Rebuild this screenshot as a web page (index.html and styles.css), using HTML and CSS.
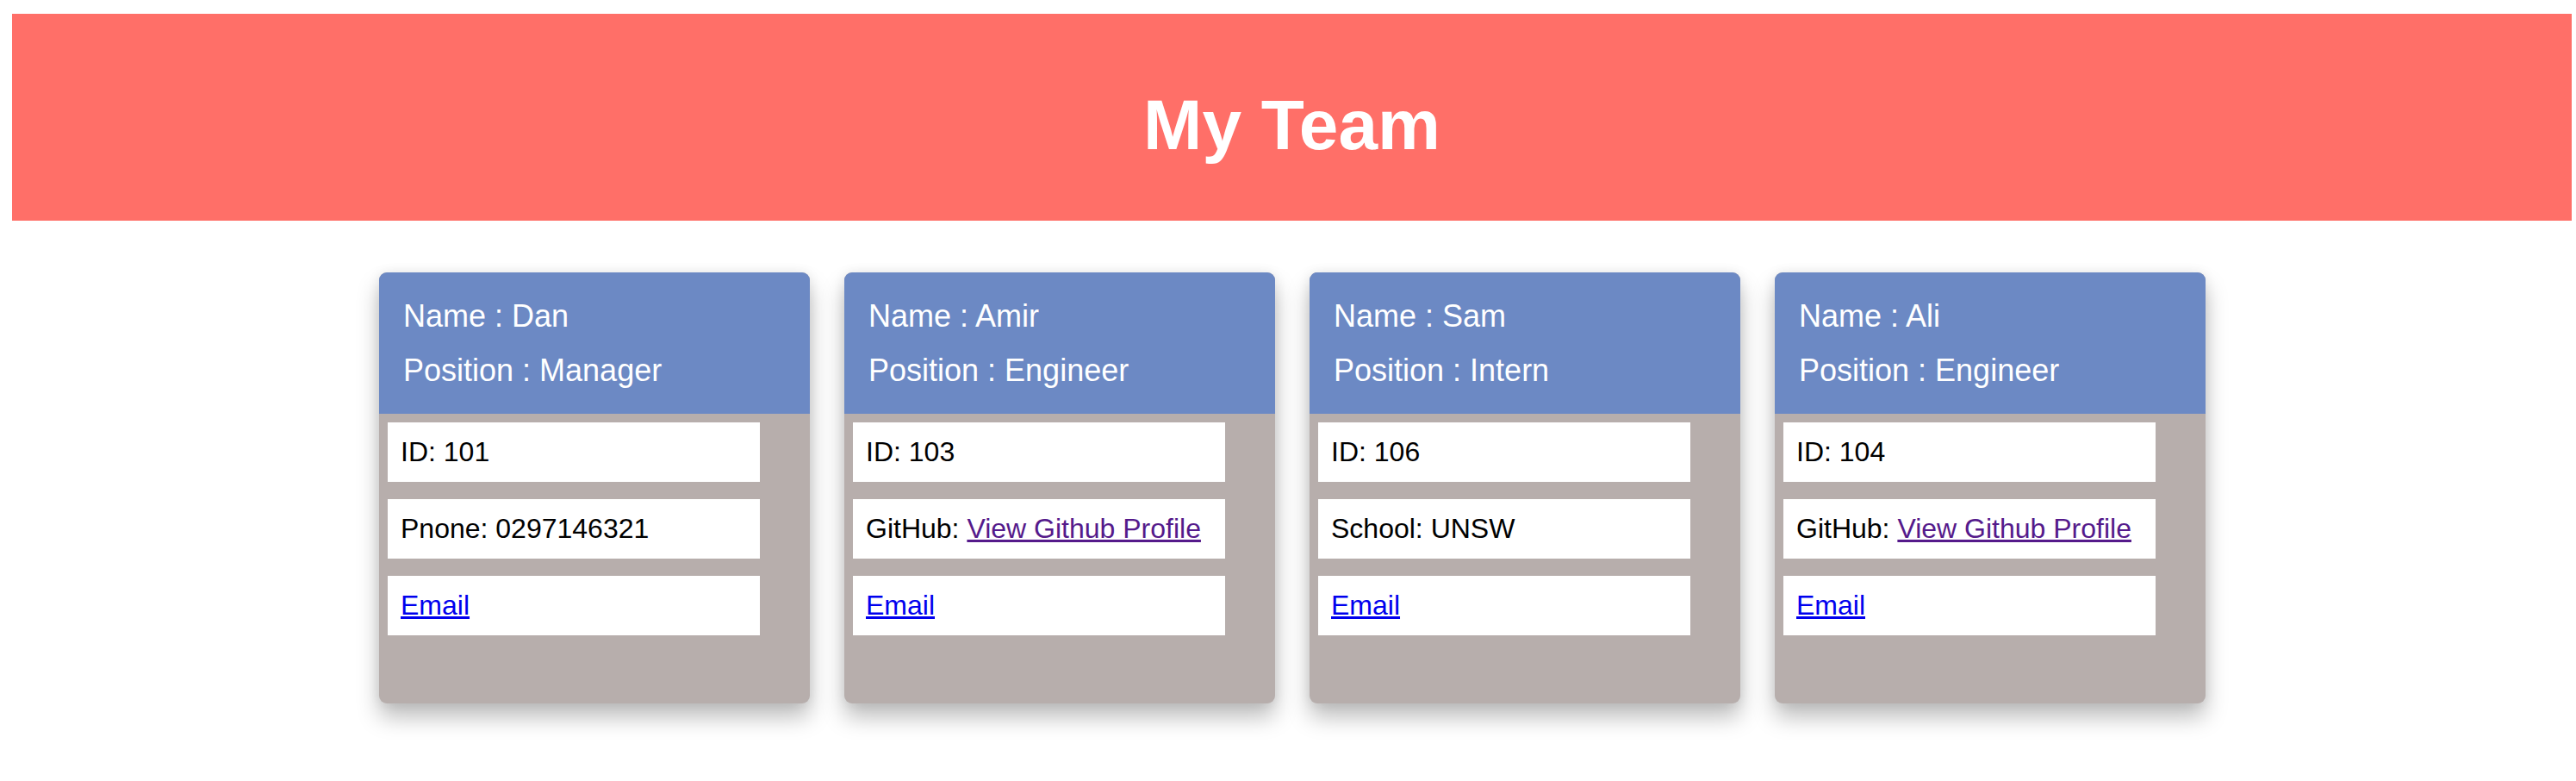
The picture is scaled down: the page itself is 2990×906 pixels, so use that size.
FILE: index.html
```html
<!DOCTYPE html>
<html lang="en">
<head>
<meta charset="utf-8">
<title>My Team</title>
<link rel="stylesheet" href="styles.css">
</head>
<body>
<header class="banner">
  <h1 class="banner-title">My Team</h1>
</header>
<main class="team">
  <section class="card">
    <div class="card-head">
      <p class="card-line">Name : Dan</p>
      <p class="card-line">Position : Manager</p>
    </div>
    <ul class="card-body">
      <li class="item">ID: 101</li>
      <li class="item">Pnone: 0297146321</li>
      <li class="item"><a class="link" href="#">Email</a></li>
    </ul>
  </section>
  <section class="card">
    <div class="card-head">
      <p class="card-line">Name : Amir</p>
      <p class="card-line">Position : Engineer</p>
    </div>
    <ul class="card-body">
      <li class="item">ID: 103</li>
      <li class="item">GitHub: <a class="link visited" href="#">View Github Profile</a></li>
      <li class="item"><a class="link" href="#">Email</a></li>
    </ul>
  </section>
  <section class="card">
    <div class="card-head">
      <p class="card-line">Name : Sam</p>
      <p class="card-line">Position : Intern</p>
    </div>
    <ul class="card-body">
      <li class="item">ID: 106</li>
      <li class="item">School: UNSW</li>
      <li class="item"><a class="link" href="#">Email</a></li>
    </ul>
  </section>
  <section class="card">
    <div class="card-head">
      <p class="card-line">Name : Ali</p>
      <p class="card-line">Position : Engineer</p>
    </div>
    <ul class="card-body">
      <li class="item">ID: 104</li>
      <li class="item">GitHub: <a class="link visited" href="#">View Github Profile</a></li>
      <li class="item"><a class="link" href="#">Email</a></li>
    </ul>
  </section>
</main>
</body>
</html>
```
FILE: styles.css
```css
html, body {
  background: #ffffff;
}
body {
  margin: 16px 5px 0 14px;
  font-family: "Liberation Sans", Arial, sans-serif;
  color: #000;
}
.banner {
  background: #ff6f68;
  height: 240px;
  box-sizing: border-box;
  padding: 82px 0 64px;
}
.banner-title {
  margin: 0;
  text-align: center;
  color: #ffffff;
  font-size: 82px;
  font-weight: bold;
  line-height: 94px;
}
.team {
  display: flex;
  justify-content: center;
  gap: 40px;
  margin-top: 60px;
  padding: 0 0 60px 1px;
}
.card {
  width: 500px;
  height: 500px;
  background: #b7aeac;
  border-radius: 9px;
  overflow: hidden;
  box-shadow: 0 16px 26px rgba(0, 0, 0, 0.26), 0 0 14px rgba(0, 0, 0, 0.08);
  display: flex;
  flex-direction: column;
}
.card-head {
  background: #6c89c4;
  padding: 20px 28px 19px;
  color: #ffffff;
}
.card-line {
  margin: 0;
  font-size: 36px;
  line-height: 62.5px;
}
.card-body {
  list-style: none;
  margin: 0;
  padding: 10px 0 0 10px;
  display: flex;
  flex-direction: column;
  gap: 20px;
}
.item {
  width: 432px;
  box-sizing: border-box;
  background: #ffffff;
  padding: 16px 15px;
  font-size: 32px;
  line-height: 37px;
}
.link {
  color: #0000ee;
  text-decoration: underline;
}
.link.visited {
  color: #551a8b;
}
```
